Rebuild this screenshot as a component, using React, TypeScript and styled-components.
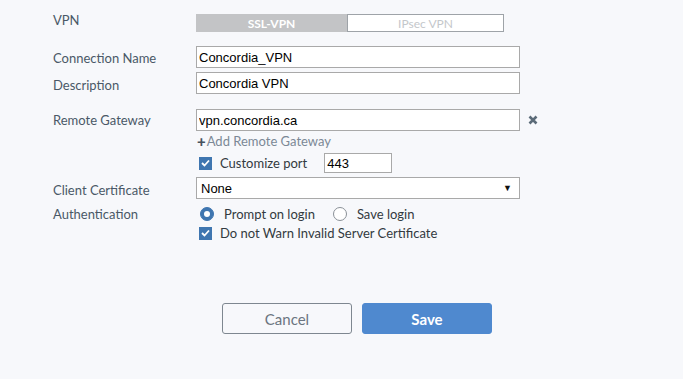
import React, { useState } from 'react';
import styled, { createGlobalStyle } from 'styled-components';

const GlobalStyle = createGlobalStyle`
  html, body {
    margin: 0;
    padding: 0;
    background: #f7f8fb;
  }
  body {
    font-family: Lato, "Open Sans", sans-serif;
  }
`;

const Page = styled.div`
  width: 683px;
  height: 379px;
  box-sizing: border-box;
  padding: 14px 0 0 53px;
  background: #f7f8fb;
`;

const Row = styled.div<{ $top?: number; $h?: number }>`
  display: flex;
  align-items: center;
  margin-top: ${(p) => p.$top ?? 0}px;
  height: ${(p) => (p.$h ? `${p.$h}px` : 'auto')};
`;

const Label = styled.div<{ $shift?: number }>`
  width: 143px;
  flex: none;
  font-size: 13px;
  line-height: 16px;
  color: #4a5867;
  position: relative;
  top: ${(p) => p.$shift ?? 0}px;
`;

const Toggle = styled.div`
  display: flex;
  width: 308px;
  height: 18px;
`;

const ToggleOpt = styled.div<{ $active?: boolean }>`
  flex: none;
  width: ${(p) => (p.$active ? 151 : 157)}px;
  box-sizing: border-box;
  display: flex;
  align-items: center;
  justify-content: center;
  font-size: 12px;
  font-weight: ${(p) => (p.$active ? 700 : 400)};
  color: ${(p) => (p.$active ? '#ffffff' : '#c4c7cb')};
  background: ${(p) => (p.$active ? '#c3c4c6' : '#ffffff')};
  border: 1px solid ${(p) => (p.$active ? '#c3c4c6' : '#9ea3a8')};
`;

const TextBox = styled.input<{ $w?: number; $h?: number }>`
  width: ${(p) => p.$w ?? 324}px;
  height: ${(p) => p.$h ?? 22}px;
  box-sizing: border-box;
  border: 1px solid #a9a9a9;
  background: #fff;
  padding: 0 2px;
  margin: 0;
  font-family: "Liberation Sans", Arial, sans-serif;
  font-size: 13px;
  color: #000;
  outline: none;
`;

const Clear = styled.span`
  display: inline-flex;
  margin-left: 8px;
`;

const AddLink = styled.div`
  margin: 2px 0 0 144px;
  font-size: 13px;
  line-height: 16px;
  color: #7b8896;
  display: flex;
  align-items: center;
`;

const Plus = styled.span`
  color: #47525e;
  font-weight: 900;
  font-size: 15px;
  margin-right: 1px;
`;

const Indent = styled.div`
  width: 146px;
  flex: none;
`;

const Check = styled.span`
  width: 13px;
  height: 13px;
  flex: none;
  background: #3f76b0;
  display: inline-flex;
  align-items: center;
  justify-content: center;
`;

const OptText = styled.span<{ $gap?: number }>`
  font-size: 13px;
  color: #333a40;
  margin-left: ${(p) => p.$gap ?? 8}px;
`;

const PortSpacer = styled.span`
  width: 17px;
`;

const Select = styled.div`
  width: 324px;
  height: 22px;
  box-sizing: border-box;
  border: 1px solid #a9a9a9;
  background: #fff;
  display: flex;
  align-items: center;
  justify-content: space-between;
  padding: 0 7px 0 4px;
  font-family: "Liberation Sans", Arial, sans-serif;
  font-size: 13px;
  color: #000;
`;

const Arrow = styled.span`
  font-size: 9px;
  color: #111;
`;

const Radio = styled.span<{ $on?: boolean }>`
  width: 14px;
  height: 14px;
  box-sizing: border-box;
  border-radius: 50%;
  flex: none;
  display: inline-flex;
  align-items: center;
  justify-content: center;
  background: ${(p) => (p.$on ? '#3f76b0' : '#fff')};
  border: 1px solid ${(p) => (p.$on ? '#3f76b0' : '#8a9097')};
  margin-left: ${(p) => (p.$on ? 4 : 18)}px;

  &::after {
    content: '';
    display: ${(p) => (p.$on ? 'block' : 'none')};
    width: 6px;
    height: 6px;
    border-radius: 50%;
    background: #fff;
  }
`;

const Buttons = styled.div`
  display: flex;
  gap: 10px;
  margin: 62px 0 0 169px;
`;

const Btn = styled.button<{ $primary?: boolean }>`
  width: 130px;
  height: 31px;
  box-sizing: border-box;
  border-radius: 3px;
  font-family: Lato, sans-serif;
  font-size: 15px;
  font-weight: ${(p) => (p.$primary ? 700 : 400)};
  color: ${(p) => (p.$primary ? '#ffffff' : '#6b7580')};
  background: ${(p) => (p.$primary ? '#4f89cf' : '#f7f8fb')};
  border: 1px solid ${(p) => (p.$primary ? '#4f89cf' : '#7e8790')};
  padding: 0;
  cursor: pointer;
`;

const Tick = () => (
  <svg width="9" height="8" viewBox="0 0 9 8">
    <path d="M1 4 L3.5 6.5 L8 1.5" fill="none" stroke="#fff" strokeWidth="1.8" />
  </svg>
);

const Cross = () => (
  <svg width="10" height="10" viewBox="0 0 10 10">
    <path d="M1.5 1.5 L8.5 8.5 M8.5 1.5 L1.5 8.5" stroke="#5b6b78" strokeWidth="2.6" />
  </svg>
);

const App: React.FC = () => {
  const [name, setName] = useState('Concordia_VPN');
  const [desc, setDesc] = useState('Concordia VPN');
  const [gateway, setGateway] = useState('vpn.concordia.ca');
  const [port, setPort] = useState('443');

  return (
    <Page>
      <GlobalStyle />

      {/* VPN type */}
      <Row $h={18}>
        <Label $shift={-3}>VPN</Label>
        <Toggle>
          <ToggleOpt $active>SSL-VPN</ToggleOpt>
          <ToggleOpt>IPsec VPN</ToggleOpt>
        </Toggle>
      </Row>

      <Row $top={14}>
        <Label $shift={1}>Connection Name</Label>
        <TextBox value={name} onChange={(e) => setName(e.target.value)} />
      </Row>

      <Row $top={4}>
        <Label $shift={2}>Description</Label>
        <TextBox value={desc} onChange={(e) => setDesc(e.target.value)} />
      </Row>

      <Row $top={15}>
        <Label>Remote Gateway</Label>
        <TextBox value={gateway} onChange={(e) => setGateway(e.target.value)} />
        <Clear>
          <Cross />
        </Clear>
      </Row>

      <AddLink>
        <Plus>+</Plus>Add Remote Gateway
      </AddLink>

      {/* port */}
      <Row $top={4} $h={20}>
        <Indent />
        <Check>
          <Tick />
        </Check>
        <OptText>Customize port</OptText>
        <PortSpacer />
        <TextBox $w={68} $h={20} value={port} onChange={(e) => setPort(e.target.value)} />
      </Row>

      <Row $top={4}>
        <Label $shift={2}>Client Certificate</Label>
        <Select>
          None
          <Arrow>▼</Arrow>
        </Select>
      </Row>

      <Row $top={6} $h={18}>
        <Label>Authentication</Label>
        <Radio $on />
        <OptText $gap={10}>Prompt on login</OptText>
        <Radio />
        <OptText $gap={10}>Save login</OptText>
      </Row>

      <Row $top={2} $h={16}>
        <Indent />
        <Check>
          <Tick />
        </Check>
        <OptText>Do not Warn Invalid Server Certificate</OptText>
      </Row>

      <Buttons>
        <Btn>Cancel</Btn>
        <Btn $primary>Save</Btn>
      </Buttons>
    </Page>
  );
};

export default App;
